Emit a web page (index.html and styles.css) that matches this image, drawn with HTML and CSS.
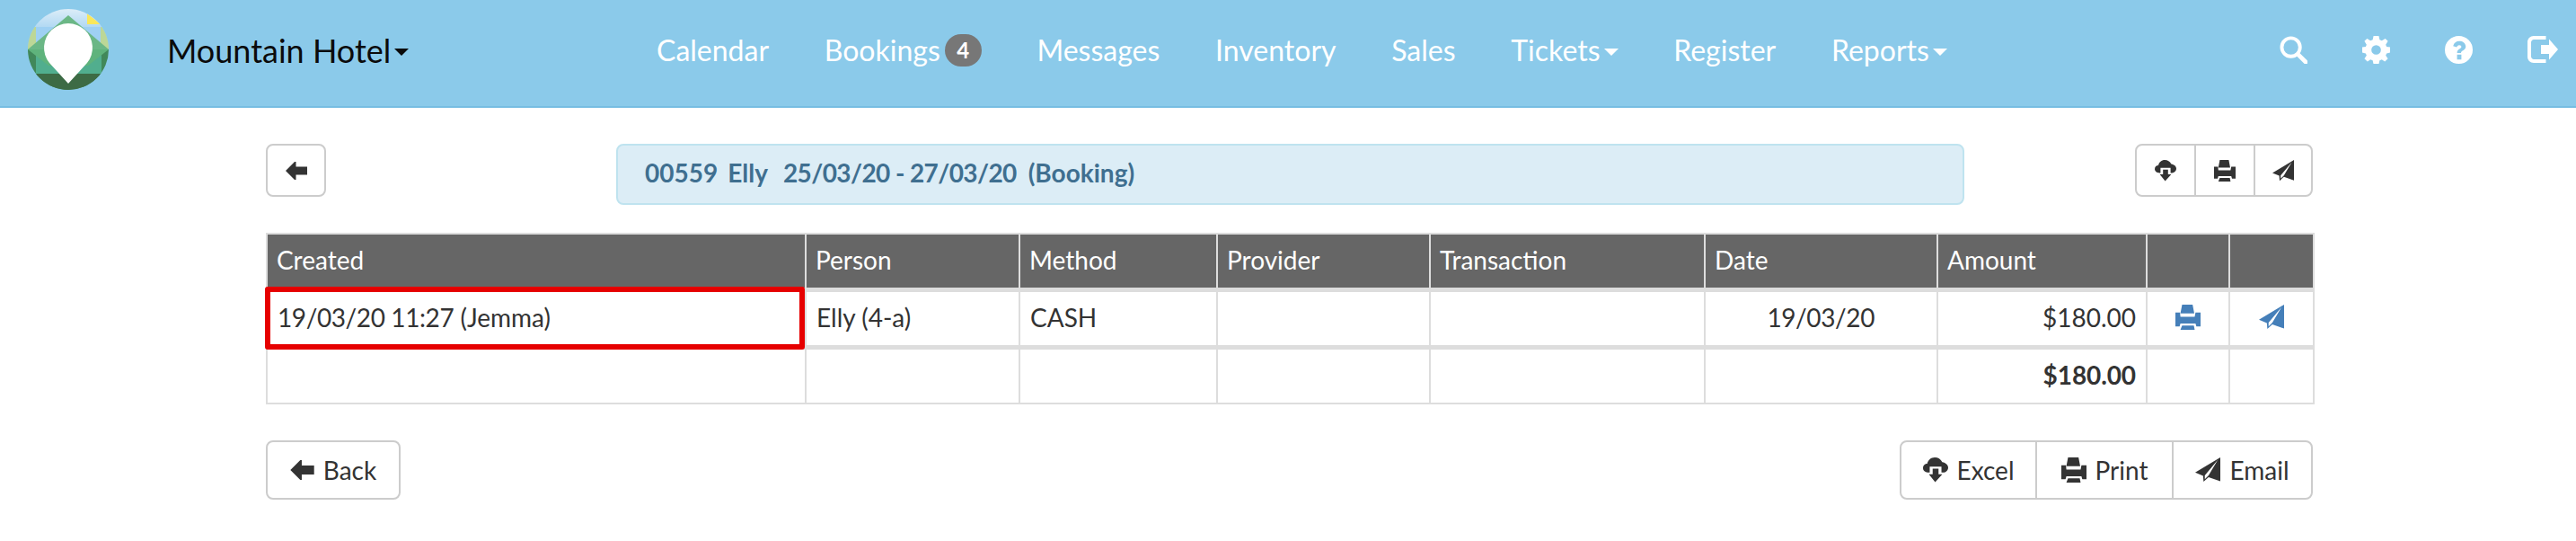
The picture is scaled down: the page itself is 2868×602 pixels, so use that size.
FILE: index.html
```html
<!DOCTYPE html>
<html lang="en">
<head>
<meta charset="utf-8">
<title>Mountain Hotel</title>
<link rel="stylesheet" href="styles.css">
</head>
<body>
<svg class="defs" width="0" height="0" aria-hidden="true">
  <defs>
    <symbol id="i-left" viewBox="0 0 24 20"><path d="M0 10 10 0h1.500v5.500H24v9H11.500V20H10z"/></symbol>
    <symbol id="i-cloud" viewBox="0 0 30 30"><path d="M8 18H7C3 18 0 16 0 12.500 0 9.500 2.500 7.500 5 7.500 6 3 9.500 0 14 0c4 0 7 2 9 5.500 4 .5 7 3.500 7 6.500 0 3.500-3 6-6 6h-2V11H8zM11.500 13.500h7V20H23l-8.500 9.500L7 20h4.500z"/></symbol>
    <symbol id="i-print" viewBox="0 0 30 30"><path d="M8 0h12.500l2 10.500H6zM0 9.500h5.500l.5 5h17l1-5h6V26h-5l-1-3.500H6L5 26H0zM8 25h14l1 5H6z"/></symbol>
    <symbol id="i-send" viewBox="0 0 30 30"><path fill-rule="evenodd" d="M30 0 0 18l9.500 4 .5 7 6-5.500 14 5zM27 3 11.500 21.500V26l4.500-4.500z"/></symbol>
  </defs>
</svg>
<header class="navbar">
  <svg class="logo" viewBox="0 0 90 90" aria-label="Logo">
    <defs>
      <linearGradient id="sky" x1="0" y1="0" x2="0" y2="1"><stop offset="0" stop-color="#dcedf8"/><stop offset="1" stop-color="#b2d9f3"/></linearGradient>
      <clipPath id="disc"><circle cx="45" cy="45" r="45"/></clipPath>
    </defs>
    <g clip-path="url(#disc)">
      <rect width="90" height="20" fill="url(#sky)"/>
      <rect y="20" width="90" height="30" fill="#9ed0f3"/>
      <path d="M66 5 81 17H66z" fill="#f9e75a"/>
      <path d="M0 20h9v25H0zM81 20h9v25h-9z" fill="#bcd797"/>
      <path d="M45 7 90 45H0z" fill="#6bb786"/>
      <rect y="45" width="90" height="45" fill="#41885a"/>
      <path d="M9 45h73v27H9z" fill="#51ae8e"/>
      <path d="M0 45h90L67 63H23z" fill="#5fb37c"/>
      <rect y="72" width="90" height="18" fill="#3d6b45"/>
      <path d="M45 83 24 60A27 27 0 1 1 66 60z" fill="#fff"/>
    </g>
  </svg>
  <a class="brand">Mountain Hotel<span class="caret"></span></a>
  <nav class="menu">
    <a>Calendar</a>
    <a>Bookings<span class="badge">4</span></a>
    <a>Messages</a>
    <a>Inventory</a>
    <a>Sales</a>
    <a>Tickets<span class="caret"></span></a>
    <a>Register</a>
    <a>Reports<span class="caret"></span></a>
  </nav>
  <div class="tools">
    <svg class="tool" viewBox="0 0 32 32"><circle cx="13" cy="13" r="10.500" fill="none" stroke="#fff" stroke-width="4"/><path d="M21 21 30 30" stroke="#fff" stroke-width="5" stroke-linecap="round"/></svg>
    <svg class="tool" viewBox="0 0 32 32"><path fill="#fff" fill-rule="evenodd" d="M13 0h6l1 4.500 2.500 1L26.500 3l3 3-2.500 4 1 2.500L32 13v6l-4 1-1 2.500L29.500 26l-3.500 3.500-3.500-2.500-2.500 1-1 4.500h-6l-1-4.500-2.500-1L6 29.500 2.500 26 5 22.500 4 20l-4-1v-6l4-.5L5 10 2.500 6l3-3L9.500 5.500 12 4.500zM16 10.500a5.500 5.500 0 1 0 0 11 5.500 5.500 0 0 0 0-11z"/></svg>
    <svg class="tool" viewBox="0 0 32 32"><path fill="#fff" fill-rule="evenodd" d="M16 0a16 16 0 1 1 0 32 16 16 0 0 1 0-32zM9.500 11.500l4 1.500C14 11.500 15 10.500 16.500 10.500c1.500 0 2.500.8 2.500 2 0 2.500-5 2.500-5 7h4.500c0-3 5.500-3 5.500-7.500C23.500 8 20.500 6 16.500 6 13 6 10.500 8 9.500 11.500zM14 21.500V27h5v-5.500z"/></svg>
    <svg class="tool tool-wide" viewBox="0 0 34 30"><path fill="#fff" d="M7 0h13.500v4H7C5.500 4 4 5.500 4 7v16c0 1.500 1.500 3 3 3h13.500v4H7c-4 0-7-3-7-7V7c0-4 3-7 7-7zM15 10h9V3.500L34 15 24 26.500V20h-9z"/></svg>
  </div>
</header>
<main class="page">
  <div class="topbar">
    <button class="btn btn-icon"><svg class="ic ic-left"><use href="#i-left"/></svg></button>
    <div class="alert"><span>00559</span> <span class="a-name">Elly</span> <span class="a-dates">25/03/20 - 27/03/20</span> <span class="a-kind">(Booking)</span></div>
    <div class="group">
      <button class="btn btn-cell"><svg class="ic ic-small"><use href="#i-cloud"/></svg></button>
      <button class="btn btn-cell"><svg class="ic ic-small"><use href="#i-print"/></svg></button>
      <button class="btn btn-cell"><svg class="ic ic-small"><use href="#i-send"/></svg></button>
    </div>
  </div>
  <table class="grid">
    <colgroup>
      <col class="c1"><col class="c2"><col class="c3"><col class="c4"><col class="c5"><col class="c6"><col class="c7"><col class="c8"><col class="c9">
    </colgroup>
    <thead>
      <tr><th>Created</th><th>Person</th><th>Method</th><th>Provider</th><th>Transaction</th><th>Date</th><th>Amount</th><th></th><th></th></tr>
    </thead>
    <tbody>
      <tr class="row-main">
        <td class="marked"><span class="digits">19/03/20 11:27</span> (Jemma)</td><td>Elly (4-a)</td><td>CASH</td><td></td><td></td><td class="date"><span class="digits">19/03/20</span></td><td class="num">$180.00</td>
        <td class="act"><svg class="ic ic-blue"><use href="#i-print"/></svg></td>
        <td class="act"><svg class="ic ic-blue"><use href="#i-send"/></svg></td>
      </tr>
      <tr class="row-total">
        <td></td><td></td><td></td><td></td><td></td><td></td><td class="num total">$180.00</td><td></td><td></td>
      </tr>
    </tbody>
  </table>
  <div class="bottombar">
    <button class="btn btn-back"><svg class="ic ic-arrow"><use href="#i-left"/></svg>Back</button>
    <div class="group">
      <button class="btn btn-cell btn-excel"><svg class="ic"><use href="#i-cloud"/></svg>Excel</button>
      <button class="btn btn-cell btn-print"><svg class="ic"><use href="#i-print"/></svg>Print</button>
      <button class="btn btn-cell btn-email"><svg class="ic"><use href="#i-send"/></svg>Email</button>
    </div>
  </div>
</main>
</body>
</html>
```
FILE: styles.css
```css
* { box-sizing: border-box; }
html, body { margin: 0; padding: 0; background: #fff; }
body { font-family: Lato, "Open Sans", sans-serif; font-size: 28px; line-height: 40px; color: #333; }
.defs { position: absolute; }

.navbar { display: flex; align-items: center; height: 120px; padding: 0 20px 6px 31px; background: #8bcaea; border-bottom: 2px solid #76bde2; }
.logo { width: 90px; height: 90px; flex: none; margin-bottom: 2px; }
.brand { display: flex; align-items: center; margin-left: 65px; width: 271px; flex: none; font-size: 36px; color: #0b0b0b; white-space: nowrap; }
.brand .caret { border-top-color: #0b0b0b; margin-left: 4px; }
.caret { display: inline-block; width: 0; height: 0; margin: 4px 0 0 4px; border-top: 8px solid #fff; border-left: 8px solid transparent; border-right: 8px solid transparent; }
.menu { display: flex; margin-left: 274px; gap: 61.7px; font-size: 32px; color: #fff; flex: none; }
.menu a { display: flex; align-items: center; }
.badge { display: inline-block; width: 41px; height: 36px; margin-left: 5px; border-radius: 20px; background: #777; color: #fff; font-size: 24px; line-height: 36px; font-weight: 700; text-align: center; }
.tools { display: flex; align-items: center; margin: 0 0 2px auto; gap: 61px; }
.tool { display: block; width: 31px; height: 31px; }
.tool-wide { width: 34px; height: 30px; }

.page { padding: 0 293px 0 296px; }
.topbar { display: flex; justify-content: space-between; align-items: flex-start; margin-top: 40px; }
.btn { display: inline-flex; align-items: center; justify-content: center; font: inherit; color: #333; background: #fff; border: 2px solid #ccc; border-radius: 8px; padding: 0; }
.btn-icon { width: 67px; height: 59px; }
.ic { display: block; width: 28px; height: 28px; fill: #333; flex: none; }
.ic-small { width: 24px; height: 24px; }
.ic-left { width: 24px; height: 20px; }
.ic-arrow { width: 27px; height: 22px; }
.ic-blue { fill: #457fb9; }
.alert { display: flex; width: 1501px; height: 68px; margin-left: 323px; margin-right: auto; padding: 10px 30px; background: #dcedf6; border: 2px solid #bfe3ef; border-radius: 8px; color: #3f6f90; font-weight: 700; font-size: 28px; }
.a-name { margin-left: 11px; }
.a-dates { margin-left: 17px; letter-spacing: -0.6px; }
.a-kind { margin-left: 13px; }
.group { display: flex; }
.btn-cell { height: 59px; width: 68px; margin-left: -2px; border-radius: 0; }
.btn-cell:first-child { margin-left: 0; border-radius: 8px 0 0 8px; }
.btn-cell:last-child { width: 66px; border-radius: 0 8px 8px 0; }

.grid { width: 2279px; margin-top: 31px; border-collapse: collapse; table-layout: fixed; }
.c1 { width: 600px; } .c2 { width: 238px; } .c3 { width: 220px; } .c4 { width: 237px; } .c5 { width: 306px; }
.c6 { width: 259px; } .c7 { width: 233px; } .c8 { width: 92px; } .c9 { width: 94px; }
.grid th { height: 62px; padding: 0 11px 2px 10px; background: #666; color: #fff; font-weight: 400; text-align: left; border: 2px solid #ddd; }
.grid td { padding: 0 11px 2px; border: 2px solid #ddd; }
.row-main td { height: 64px; border-top-width: 5px; border-bottom-width: 5px; }
.row-total td { height: 63px; }
.digits { letter-spacing: -0.4px; }
.date { text-align: right; padding-right: 69px !important; }
.num { text-align: right; }
.total { font-weight: 700; letter-spacing: -0.1px; }
.act .ic { margin: 0 auto; }
.marked { position: relative; }
.marked::after { content: ""; position: absolute; left: -3px; right: 0; top: -6px; bottom: -5px; border: 6px solid #e60000; border-radius: 3px; }

.bottombar { display: flex; justify-content: space-between; margin-top: 40px; }
.btn-back { width: 150px; height: 66px; gap: 10px; }
.bottombar .btn-cell { height: 66px; gap: 10px; }
.bottombar .btn-excel { width: 153px; }
.bottombar .btn-print { width: 154px; }
.bottombar .btn-email { width: 157px; }
```
